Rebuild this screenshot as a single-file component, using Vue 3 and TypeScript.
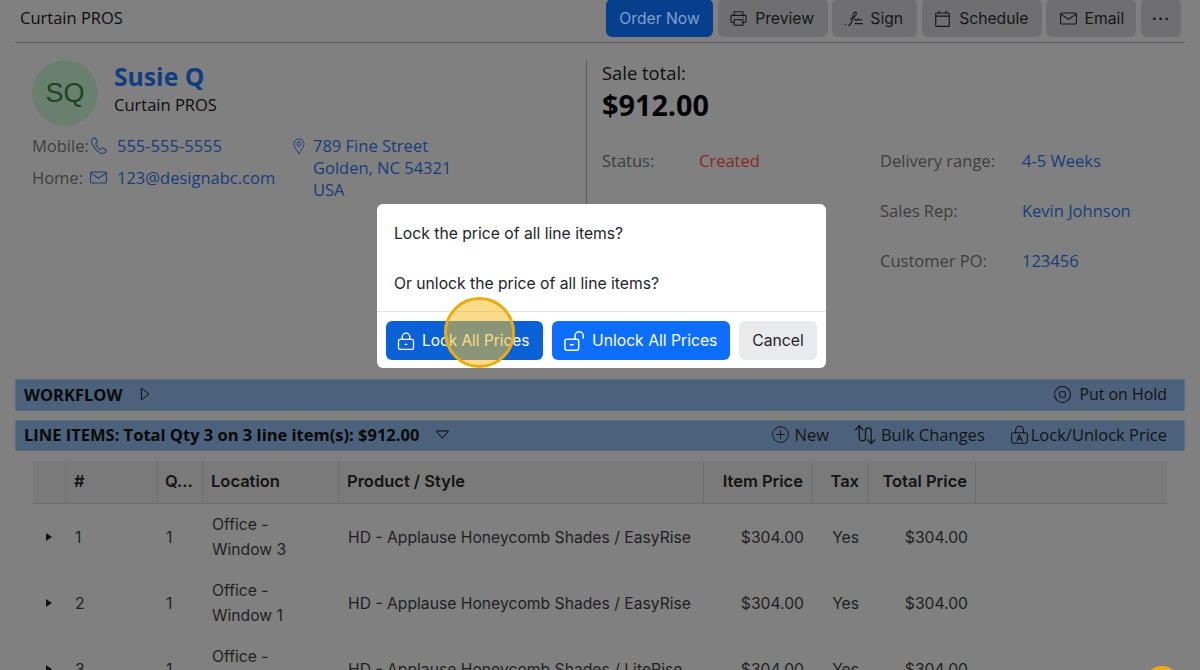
<script setup lang="ts">
const icons: Record<string, string[]> = {
  printer: ['M6.5 8V3.5h11V8', 'M6.5 17H4a1.5 1.5 0 0 1-1.5-1.5v-6A1.5 1.5 0 0 1 4 8h16a1.5 1.5 0 0 1 1.5 1.5v6A1.5 1.5 0 0 1 20 17h-2.500', 'M6.500 13.500h11v7h-11z', 'M17.800 10.800h.4'],
  sign: ['M1.500 19.500h.6', 'M6 21c2.500-1 4.500-6 5-11 .3-3.500 2-6 3.500-6 1.600 0 1.500 3-1 5.500-2 2-4 3-5.500 3', 'M13.500 12.500c1 2 2 2.500 3 1.500l1-1.500c.7 1.200 2 1.500 5 1', 'M14 18.500h9'],
  calendar: ['M4.500 5h15a1 1 0 0 1 1 1v15a1 1 0 0 1-1 1h-15a1 1 0 0 1-1-1V6a1 1 0 0 1 1-1z', 'M3.500 9h17', 'M7.500 2.500V5', 'M16.500 2.500V5'],
  mail: ['M3.500 5h17A1.500 1.500 0 0 1 22 6.500v11a1.500 1.500 0 0 1-1.500 1.500h-17A1.500 1.500 0 0 1 2 17.500v-11A1.500 1.500 0 0 1 3.500 5z', 'M2.500 6.500 12 13l9.500-6.500'],
  phone: ['M6.500 2.500 3.800 4.200C2.500 5.200 2.800 8 5.500 12.500c3 5 6.500 8.500 10.500 9.500 2 .5 3.500-.3 5.500-2.500.5-.6.5-1.200 0-1.600l-3.500-2.600c-.6-.4-1.100-.3-1.600.1l-1.400 1.300c-.5.400-1 .4-1.500 0-2.300-1.800-4.300-4.300-5-6.200-.2-.5 0-1 .4-1.300l1.300-1c.5-.4.600-1 .3-1.500L8.200 3c-.4-.7-1.100-.9-1.700-.5z'],
  pin: ['M12 23C8 17.500 4.500 13.500 4.500 9a7.500 7.500 0 0 1 15 0c0 4.500-3.500 8.500-7.500 14z', 'M12 6a3 3 0 1 1 0 6 3 3 0 0 1 0-6z'],
  play: ['M7 3.500 18 12 7 20.500z'],
  down: ['M3.500 7h17L12 17z'],
  hold: ['M12 2a10 10 0 1 1 0 20 10 10 0 0 1 0-20z', 'M9.500 8.500h5a1 1 0 0 1 1 1v5a1 1 0 0 1-1 1h-5a1 1 0 0 1-1-1v-5a1 1 0 0 1 1-1z'],
  plus: ['M12 2a10 10 0 1 1 0 20 10 10 0 0 1 0-20z', 'M12 7v10', 'M7 12h10'],
  bulk: ['M2.500 7.500 6 3.500l3.500 4', 'M6 3.500V15a3 3 0 0 0 6 0V8a2.800 2.800 0 0 1 5.500 0v12.500', 'M14 17l3.500 4 3.500-4'],
  lockA: ['M5 10h14a2 2 0 0 1 2 2v8a2 2 0 0 1-2 2H5a2 2 0 0 1-2-2v-8a2 2 0 0 1 2-2z', 'M7.500 10V7a4.500 4.500 0 0 1 9 0v3', 'M9 19.500l3-7 3 7', 'M10 17h4'],
  lock: ['M5 10h14a2 2 0 0 1 2 2v8a2 2 0 0 1-2 2H5a2 2 0 0 1-2-2v-8a2 2 0 0 1 2-2z', 'M7.500 10V7a4.500 4.500 0 0 1 9 0v3', 'M11 16h2'],
  unlock: ['M3 10h11a2 2 0 0 1 2 2v8a2 2 0 0 1-2 2H3a2 2 0 0 1-2-2v-8a2 2 0 0 1 2-2z', 'M12 10V6.500a4.500 4.500 0 0 1 9 0V9', 'M7 16h3'],
}

interface NavBtn { label: string; icon?: string; primary?: boolean }
const navButtons: NavBtn[] = [
  { label: 'Order Now', primary: true },
  { label: 'Preview', icon: 'printer' },
  { label: 'Sign', icon: 'sign' },
  { label: 'Schedule', icon: 'calendar' },
  { label: 'Email', icon: 'mail' },
]

const details = [
  { label: 'Status:', value: 'Created', danger: true },
  { label: 'Delivery range:', value: '4-5 Weeks' },
  { label: '', value: '' },
  { label: 'Sales Rep:', value: 'Kevin Johnson' },
  { label: '', value: '' },
  { label: 'Customer PO:', value: '123456' },
]

const columns = ['', '#', 'Q...', 'Location', 'Product / Style', 'Item Price', 'Tax', 'Total Price', '']
const rows = [
  { n: 1, loc: 'Window 3', style: 'EasyRise' },
  { n: 2, loc: 'Window 1', style: 'EasyRise' },
  { n: 3, loc: 'Window 2', style: 'LiteRise' },
]
</script>

<template>
  <div class="page">
    <header class="topbar">
      <span class="brand">Curtain PROS</span>
      <nav class="actions">
        <button v-for="b in navButtons" :key="b.label" class="nav-btn" :class="{ primary: b.primary }">
          <svg v-if="b.icon" class="ico nav-ico" viewBox="0 0 24 24"><path v-for="d in icons[b.icon]" :key="d" :d="d" /></svg>
          {{ b.label }}
        </button>
        <button class="nav-btn more">···</button>
      </nav>
    </header>

    <section class="summary">
      <div class="customer">
        <div class="identity">
          <div class="avatar">SQ</div>
          <div class="names">
            <a class="name">Susie Q</a>
            <span class="company">Curtain PROS</span>
          </div>
        </div>
        <div class="contact">
          <div class="phones">
            <div class="contact-row">
              <span class="muted c-label">Mobile:</span>
              <svg class="ico link-ico" viewBox="0 0 24 24"><path v-for="d in icons.phone" :key="d" :d="d" /></svg>
              <a class="link">555-555-5555</a>
            </div>
            <div class="contact-row second">
              <span class="muted c-label">Home:</span>
              <svg class="ico link-ico" viewBox="0 0 24 24"><path v-for="d in icons.mail" :key="d" :d="d" /></svg>
              <a class="link">123@designabc.com</a>
            </div>
          </div>
          <div class="address">
            <svg class="ico pin-ico" viewBox="0 0 24 24"><path v-for="d in icons.pin" :key="d" :d="d" /></svg>
            <a class="link addr-text">789 Fine Street<br />Golden, NC 54321<br />USA</a>
          </div>
        </div>
      </div>
      <div class="sale">
        <div class="sale-label">Sale total:</div>
        <div class="sale-total">$912.00</div>
        <div class="details">
          <template v-for="(d, i) in details" :key="i">
            <span class="muted">{{ d.label }}</span>
            <span class="link" :class="{ danger: d.danger }">{{ d.value }}</span>
          </template>
        </div>
      </div>
    </section>

    <div class="bar workflow">
      <div class="bar-title">
        WORKFLOW
        <svg class="ico caret" viewBox="0 0 24 24"><path v-for="d in icons.play" :key="d" :d="d" /></svg>
      </div>
      <div class="bar-actions">
        <span class="bar-act hold">
          <svg class="ico hold-ico" viewBox="0 0 24 24"><path v-for="d in icons.hold" :key="d" :d="d" /></svg>
          Put on Hold
        </span>
      </div>
    </div>

    <div class="bar items">
      <div class="bar-title small">
        LINE ITEMS: Total Qty 3 on 3 line item(s): $912.00
        <svg class="ico caret down" viewBox="0 0 24 24"><path v-for="d in icons.down" :key="d" :d="d" /></svg>
      </div>
      <div class="bar-actions">
        <span class="bar-act">
          <svg class="ico act-ico" viewBox="0 0 24 24"><path v-for="d in icons.plus" :key="d" :d="d" /></svg>New
        </span>
        <span class="bar-act">
          <svg class="ico act-ico bulk" viewBox="0 0 24 24"><path v-for="d in icons.bulk" :key="d" :d="d" /></svg>Bulk Changes
        </span>
        <span class="bar-act">
          <svg class="ico act-ico padlock" viewBox="0 0 24 24"><path v-for="d in icons.lockA" :key="d" :d="d" /></svg>Lock/Unlock Price
        </span>
      </div>
    </div>

    <div class="table">
      <div class="thead">
        <div v-for="(c, i) in columns" :key="i" class="th" :class="{ right: i >= 5 && i <= 7 }">{{ c }}</div>
      </div>
      <div v-for="r in rows" :key="r.n" class="tr">
        <div class="td"><span class="expander"></span></div>
        <div class="td">{{ r.n }}</div>
        <div class="td">1</div>
        <div class="td loc">Office -<br />{{ r.loc }}</div>
        <div class="td">HD - Applause Honeycomb Shades / {{ r.style }}</div>
        <div class="td right">$304.00</div>
        <div class="td right">Yes</div>
        <div class="td right">$304.00</div>
        <div class="td"></div>
      </div>
    </div>

    <div class="modal">
      <div class="modal-body">
        <p>Lock the price of all line items?</p>
        <p>Or unlock the price of all line items?</p>
      </div>
      <div class="modal-footer">
        <button class="m-btn lock-btn">
          <svg class="ico m-ico" viewBox="0 0 24 24"><path v-for="d in icons.lock" :key="d" :d="d" /></svg>
          Lock All Prices
        </button>
        <button class="m-btn unlock-btn">
          <svg class="ico m-ico un" viewBox="0 0 24 24"><path v-for="d in icons.unlock" :key="d" :d="d" /></svg>
          Unlock All Prices
        </button>
        <button class="m-btn cancel-btn">Cancel</button>
      </div>
    </div>
    <div class="spot"></div>
    <div class="spot-corner"></div>
  </div>
</template>

<style>
html, body { margin: 0; background: #808080; overflow: hidden; }
</style>

<style scoped>
.page {
  position: relative;
  width: 1200px;
  height: 670px;
  overflow: hidden;
  background: #808080;
  color: #0c0c0c;
  font-family: "Open Sans", sans-serif;
  font-size: 16.5px;
}
.ico { fill: none; stroke: currentColor; stroke-width: 1.5; stroke-linecap: round; stroke-linejoin: round; flex: none; }

.topbar {
  margin: 0 15px;
  height: 42px;
  border-bottom: 1px solid #5c5c5c;
  display: flex;
  justify-content: space-between;
  padding-left: 5px;
}
.brand { line-height: 36px; color: #0e0e0e; }
.actions { display: flex; gap: 4.6px; height: 38px; padding-right: 4px; margin-top: -1px; }
.nav-btn {
  display: flex;
  align-items: center;
  justify-content: center;
  gap: 7px;
  padding: 0;
  border: 0;
  border-radius: 6px;
  background: #6f6f71;
  color: #161616;
  font: 15.7px Inter, sans-serif;
}
.nav-btn:nth-child(1) { width: 107px; }
.nav-btn:nth-child(2) { width: 110px; padding-right: 2px; }
.nav-btn:nth-child(3) { width: 85px; padding-right: 2px; }
.nav-btn:nth-child(4) { width: 120px; padding-right: 2px; }
.nav-btn:nth-child(5) { width: 90px; }
.nav-btn.primary { background: #083f8c; color: #7d9fd1; }
.nav-btn.more { width: 40px; font-weight: 700; letter-spacing: 1px; }
.nav-ico { width: 19px; height: 19px; stroke-width: 1.400; }

.summary { display: flex; height: 336px; margin: 0 15px; padding-top: 17px; box-sizing: border-box; }
.customer { width: 572px; height: 270px; border-right: 1px solid #5c5c5c; padding-left: 17px; box-sizing: border-box; }
.identity { display: flex; gap: 16px; }
.avatar {
  width: 66px;
  height: 66px;
  border-radius: 50%;
  background: #68806d;
  color: #1b4524;
  font: 27px/66px "Liberation Sans", sans-serif;
  text-align: center;
}
.names { display: flex; flex-direction: column; }
.name { font-size: 24.7px; font-weight: 700; line-height: 33px; color: #103c82; }
.company { line-height: 22px; margin-top: 1px; color: #0e0e0e; }
.contact { display: flex; margin-top: 9px; }
.phones { width: 259px; }
.contact-row { display: flex; align-items: center; height: 22px; line-height: 22px; }
.contact-row.second { margin-top: 10px; }
.c-label { width: 58px; }
.muted { color: #3e3e3e; }
.link { color: #173d7a; }
.link-ico { width: 19px; height: 19px; color: #173d7a; stroke-width: 1.300; margin: -1px 9px 0 -1px; }
.address { display: flex; align-items: flex-start; }
.pin-ico { width: 16px; height: 16px; color: #173d7a; margin: 3px 6px 0 0; stroke-width: 1.400; }
.addr-text { line-height: 22px; }

.sale { padding-left: 15px; flex: 1; }
.sale-label { font-size: 18.4px; line-height: 24px; color: #0e0e0e; margin-top: 1px; }
.sale-total { font-size: 28.8px; font-weight: 700; line-height: 40px; color: #050505; }
.details {
  display: grid;
  grid-template-columns: 97px 181px 142px 1fr;
  grid-auto-rows: 50px;
  margin-top: 25px;
  line-height: 22px;
}
.danger { color: #8c2626; }

.bar {
  margin: 0 15px;
  background: #4c617b;
  border: 1px solid #5d6f85;
  border-bottom-color: #5f6a77;
  box-sizing: border-box;
  display: flex;
  justify-content: space-between;
  align-items: center;
  padding: 0 17px 2px 8px;
}
.workflow { height: 32px; }
.items { height: 31px; margin-top: 9px; }
.bar-title { display: flex; align-items: center; font-weight: 700; color: #0a0a0a; }
.caret { width: 16px; height: 16px; margin-left: 15px; stroke-width: 1.400; }
.caret.down { margin-left: 15px; width: 17px; height: 17px; }
.bar-actions { display: flex; gap: 24.4px; }
.bar-act { display: flex; align-items: center; color: #141414; }
.hold { font-size: 15.9px; }
.hold-ico { width: 19px; height: 19px; margin-right: 7px; stroke-width: 1.300; }
.act-ico { width: 19px; height: 19px; margin-right: 4.6px; stroke-width: 1.200; }
.act-ico.bulk { width: 25px; height: 25px; margin: -3px 2.6px -3px 0; }
.act-ico.padlock { width: 21px; height: 21px; margin: -1px 0.6px -1px 0; }

.table { margin: 10px 33px 0; }
.thead, .tr {
  display: grid;
  grid-template-columns: 33px 92px 45px 136px 365px 109px 55px 108px 191px;
}
.thead { height: 43px; background: #7a7a7a; border-bottom: 1px solid #6c6c6c; box-sizing: border-box; }
.th {
  font: 600 16.5px/40px Inter, sans-serif;
  color: #141414;
  padding: 0 8px;
  border-right: 1px solid #6e6e6e;
  white-space: nowrap;
  overflow: hidden;
}
.th:nth-child(3) { padding-left: 7px; }
.th:nth-child(6) { padding-right: 9px; }
.th:last-child { border-right: 0; }
.th.right { text-align: right; }
.tr { height: 66px; font: 15.7px/25px Inter, sans-serif; color: #1f1f1f; align-items: center; }
.tr .td { padding: 0 8px; white-space: nowrap; }
.tr .td:nth-child(2) { padding-left: 9px; }
.tr .td:nth-child(4) { padding-left: 9px; }
.tr .td:nth-child(5) { padding-left: 9px; }
.tr .td:nth-child(6), .tr .td:nth-child(7) { padding-right: 9px; }
.tr .td.right { text-align: right; }
.expander {
  display: block;
  margin-left: 5px;
  width: 0;
  height: 0;
  border-left: 6px solid #141414;
  border-top: 4px solid transparent;
  border-bottom: 4px solid transparent;
}

.modal {
  position: absolute;
  left: 377px;
  top: 204px;
  width: 449px;
  height: 164px;
  background: #fff;
  border-radius: 6px;
  font-family: Inter, sans-serif;
  font-size: 15.7px;
  color: #212529;
  display: flex;
  flex-direction: column;
}
.modal-body { height: 108px; padding: 18px 17px 0; box-sizing: border-box; border-bottom: 1px solid #dee2e6; }
.modal-body p { margin: 0 0 26px; line-height: 24px; }
.modal-footer { display: flex; gap: 9px; padding: 9px; }
.m-btn {
  height: 39px;
  display: flex;
  align-items: center;
  border: 0;
  border-radius: 6px;
  font: 15.7px Inter, sans-serif;
  color: #fff;
  padding: 0;
}
.lock-btn { width: 157px; background: #0a62d6; gap: 6.500px; padding-left: 9.500px; font-size: 15.4px; }
.unlock-btn { width: 178px; background: #0d6efd; gap: 6px; padding-left: 12px; }
.cancel-btn { width: 78px; background: #e9eaee; color: #212529; justify-content: center; }
.m-ico { width: 20px; height: 20px; stroke-width: 1.600; }
.m-ico.un { width: 22px; height: 22px; }

.spot {
  position: absolute;
  left: 444px;
  top: 297px;
  width: 71px;
  height: 71px;
  box-sizing: border-box;
  border-radius: 50%;
  border: 3px solid #ebab12;
  background: rgba(244, 190, 40, 0.55);
}
.spot-corner {
  position: absolute;
  left: 1143px;
  top: 666px;
  width: 38px;
  height: 38px;
  border-radius: 50%;
  background: #ebab12;
}
</style>
